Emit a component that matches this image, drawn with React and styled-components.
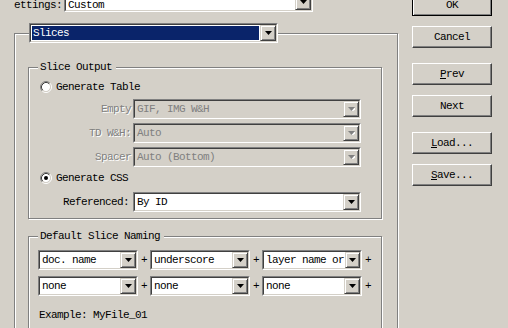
import React from 'react';
import styled, { createGlobalStyle } from 'styled-components';

const Global = createGlobalStyle`
  html, body {
    margin: 0;
    padding: 0;
    background: #d4d0c8;
    overflow: hidden;
  }
  body {
    font-family: "Liberation Mono", "DejaVu Sans Mono", monospace;
    font-size: 11px;
    letter-spacing: -0.6px;
    color: #000;
  }
`;

const Page = styled.div`
  display: flex;
  gap: 14px;
  padding-left: 14px;
  margin-top: -8px;
  height: 336px;
  overflow: hidden;
`;

const LeftCol = styled.div`
  width: 384px;
  display: flex;
  flex-direction: column;
`;

const TopRow = styled.div`
  display: flex;
  align-items: center;
  height: 20px;
`;

const TopLabel = styled.span`
  width: 50px;
  padding-top: 7px;
  line-height: 11px;
`;

const Group = styled.div`
  box-sizing: border-box;
  display: flex;
  flex-direction: column;
  border: 1px solid #808080;
  box-shadow: inset 1px 1px 0 #fff, 1px 1px 0 #fff;
  margin-top: ${p => p.$top || 0}px;
  margin-left: ${p => p.$left || 0}px;
  width: ${p => p.$width}px;
  padding-bottom: ${p => p.$bottom || 0}px;
  flex: ${p => (p.$grow ? 1 : 'none')};
`;

const Legend = styled.div`
  align-self: flex-start;
  margin-top: -7px;
  margin-left: 9px;
  padding: 0 4px 0 2px;
  height: 12px;
  line-height: 12px;
  background: #d4d0c8;
`;

const HeaderCombo = styled.div`
  align-self: flex-start;
  margin: -11px 0 0 14px;
`;

const ComboBox = styled.div`
  box-sizing: border-box;
  width: ${p => p.$width}px;
  height: 20px;
  border: 1px solid;
  border-color: #808080 #fff #fff #808080;
  flex: none;
`;

const ComboInner = styled.div`
  box-sizing: border-box;
  height: 18px;
  display: flex;
  border: 1px solid;
  border-color: #404040 #d4d0c8 #d4d0c8 #404040;
  background: ${p => (p.$disabled ? '#d4d0c8' : '#fff')};
`;

const ComboText = styled.div`
  box-sizing: border-box;
  flex: 1;
  margin: 1px;
  padding-left: 1px;
  white-space: nowrap;
  color: ${p => (p.$disabled ? '#808080' : p.$selected ? '#fff' : '#000')};
  background: ${p => (p.$selected ? '#0a246a' : 'transparent')};
`;

const ValueText = styled.span`
  display: block;
  line-height: ${p => (p.$shift ? 11 : 14)}px;
  margin-top: ${p => p.$shift || 0}px;
`;

const ArrowBtn = styled.div`
  box-sizing: border-box;
  width: 16px;
  height: 16px;
  display: flex;
  align-items: center;
  justify-content: center;
  background: #d4d0c8;
  border: 1px solid;
  border-color: #d4d0c8 #404040 #404040 #d4d0c8;
  box-shadow: inset 1px 1px 0 #fff, inset -1px -1px 0 #808080;
`;

const RadioRow = styled.div`
  display: flex;
  align-items: center;
  gap: 4px;
  height: 14px;
  margin-top: ${p => p.$top}px;
  padding-left: 11px;
`;

const FieldRow = styled.div`
  display: flex;
  align-items: center;
  margin-top: ${p => p.$top}px;
`;

const FieldLabel = styled.span`
  box-sizing: border-box;
  width: 104px;
  padding-right: ${p => (p.$disabled ? 2 : 4)}px;
  text-align: right;
  color: ${p => (p.$disabled ? '#808080' : '#000')};
  text-shadow: ${p => (p.$disabled ? '1px 1px 0 #fff' : 'none')};
`;

const NameRow = styled.div`
  display: flex;
  align-items: center;
  margin-top: ${p => p.$top}px;
  padding-left: 9px;
`;

const Plus = styled.span`
  width: 12px;
  text-align: center;
  flex: none;
`;

const Example = styled.div`
  margin-top: 13px;
  padding-left: 10px;
  line-height: 12px;
`;

const RightCol = styled.div`
  display: flex;
  flex-direction: column;
  padding-top: 2px;
`;

const Button = styled.div`
  box-sizing: border-box;
  width: 80px;
  height: 22px;
  margin-top: ${p => p.$top || 0}px;
  display: flex;
  align-items: center;
  justify-content: center;
  border: 1px solid;
  border-color: ${p => (p.$default ? '#000' : '#fff #404040 #404040 #fff')};
  box-shadow: ${p =>
    p.$default
      ? 'inset 1px 1px 0 #fff, inset -1px -1px 0 #808080'
      : 'inset -1px -1px 0 #808080'};
`;

function Arrow({ disabled }) {
  return (
    <svg width="7" height="4" viewBox="0 0 7 4">
      {disabled && <path d="M1 1h7l-3.5 4z" fill="#fff" />}
      <path d="M0 0h7l-3.5 4z" fill={disabled ? '#808080' : '#000'} />
    </svg>
  );
}

function Combo({ width, value, disabled, selected, shift }) {
  return (
    <ComboBox $width={width}>
      <ComboInner $disabled={disabled}>
        <ComboText $disabled={disabled} $selected={selected}>
          <ValueText $shift={shift}>{value}</ValueText>
        </ComboText>
        <ArrowBtn>
          <Arrow disabled={disabled} />
        </ArrowBtn>
      </ComboInner>
    </ComboBox>
  );
}

function Radio({ checked }) {
  return (
    <svg width="12" height="12" viewBox="0 0 12 12">
      <circle cx="6" cy="6" r="4.2" fill="#fff" />
      <path d="M2.11 9.89A5.5 5.5 0 0 1 9.89 2.11" stroke="#808080" fill="none" />
      <path d="M9.89 2.11A5.5 5.5 0 0 1 2.11 9.89" stroke="#fff" fill="none" />
      <path d="M2.82 9.18A4.5 4.5 0 0 1 9.18 2.82" stroke="#404040" fill="none" />
      <path d="M9.18 2.82A4.5 4.5 0 0 1 2.82 9.18" stroke="#d4d0c8" fill="none" />
      {checked && <circle cx="6" cy="6" r="2" fill="#000" />}
    </svg>
  );
}

const naming = [
  ['doc. name', 'underscore', 'layer name or'],
  ['none', 'none', 'none'],
];

export default function App() {
  return (
    <>
      <Global />
      <Page>
        <LeftCol>
          <TopRow>
            <TopLabel>ettings:</TopLabel>
            <Combo width={249} value="Custom" shift={5} />
          </TopRow>

          <Group $top={21} $width={384} $grow>
            <HeaderCombo>
              <Combo width={249} value="Slices" selected />
            </HeaderCombo>

            <Group $top={24} $left={13} $width={354} $bottom={6}>
              <Legend>Slice Output</Legend>
              <RadioRow $top={7}>
                <Radio />
                <span>Generate Table</span>
              </RadioRow>
              <FieldRow $top={5}>
                <FieldLabel $disabled>Empty</FieldLabel>
                <Combo width={228} value="GIF, IMG W&H" disabled />
              </FieldRow>
              <FieldRow $top={4}>
                <FieldLabel $disabled>TD W&amp;H:</FieldLabel>
                <Combo width={228} value="Auto" disabled />
              </FieldRow>
              <FieldRow $top={4}>
                <FieldLabel $disabled>Spacer</FieldLabel>
                <Combo width={228} value="Auto (Bottom)" disabled />
              </FieldRow>
              <RadioRow $top={4}>
                <Radio checked />
                <span>Generate CSS</span>
              </RadioRow>
              <FieldRow $top={7}>
                <FieldLabel>Referenced:</FieldLabel>
                <Combo width={228} value="By ID" />
              </FieldRow>
            </Group>

            <Group $top={17} $left={13} $width={354} $bottom={30}>
              <Legend>Default Slice Naming</Legend>
              {naming.map((row, i) => (
                <NameRow key={i} $top={i === 0 ? 8 : 6}>
                  {row.map((v, j) => (
                    <React.Fragment key={j}>
                      <Combo width={100} value={v} />
                      <Plus>+</Plus>
                    </React.Fragment>
                  ))}
                </NameRow>
              ))}
              <Example>Example: MyFile_01</Example>
            </Group>
          </Group>
        </LeftCol>

        <RightCol>
          <Button $default>OK</Button>
          <Button $top={10}>Cancel</Button>
          <Button $top={15}><span><u>P</u>rev</span></Button>
          <Button $top={10}>Next</Button>
          <Button $top={15}><span><u>L</u>oad...</span></Button>
          <Button $top={10}><span><u>S</u>ave...</span></Button>
        </RightCol>
      </Page>
    </>
  );
}
